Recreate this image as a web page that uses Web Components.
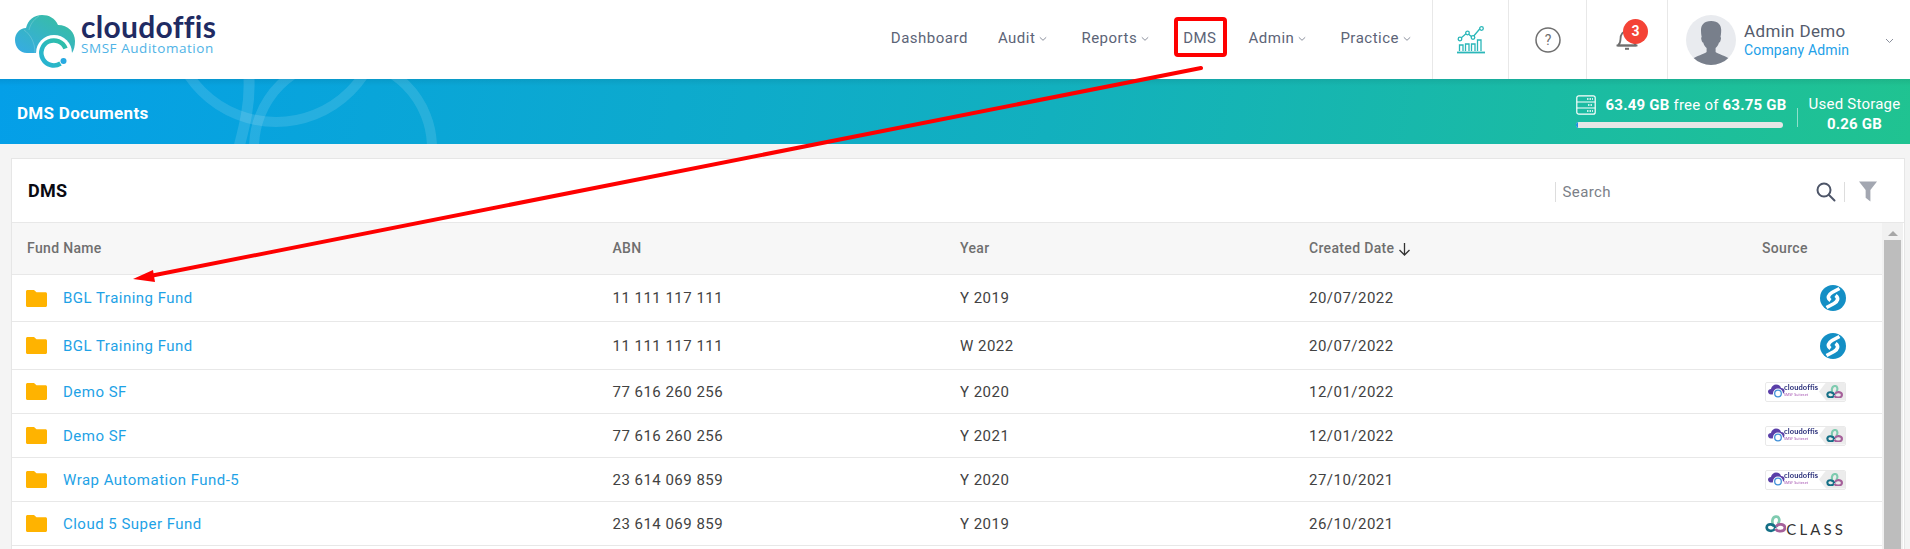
<!DOCTYPE html>
<html><head><meta charset="utf-8"><style>
html,body{margin:0;padding:0;background:#f4f4f4;font-family:Roboto,"Liberation Sans",sans-serif;height:549px;overflow:hidden}
body{position:relative}
</style></head><body>
<app-header></app-header>
<page-banner></page-banner>
<dms-card>
  <fund-row name="BGL Training Fund" abn="11 111 117 111" year="Y 2019" date="20/07/2022" src="bgl" h="47"></fund-row>
  <fund-row name="BGL Training Fund" abn="11 111 117 111" year="W 2022" date="20/07/2022" src="bgl" h="48"></fund-row>
  <fund-row name="Demo SF" abn="77 616 260 256" year="Y 2020" date="12/01/2022" src="tag" h="44"></fund-row>
  <fund-row name="Demo SF" abn="77 616 260 256" year="Y 2021" date="12/01/2022" src="tag" h="44"></fund-row>
  <fund-row name="Wrap Automation Fund-5" abn="23 614 069 859" year="Y 2020" date="27/10/2021" src="tag" h="44"></fund-row>
  <fund-row name="Cloud 5 Super Fund" abn="23 614 069 859" year="Y 2019" date="26/10/2021" src="class" h="44"></fund-row>
</dms-card>
<red-annotation></red-annotation>
<script>
const def=(n,html)=>customElements.define(n,class extends HTMLElement{
  connectedCallback(){ if(this.shadowRoot)return; const r=this.attachShadow({mode:'open'}); r.innerHTML=typeof html==='function'?html(this):html; }
});
const chev=`<svg width="8" height="6" viewBox="0 0 8 6" style="margin-left:4px;position:relative;top:1px"><path d="M.8 1.3 4 4.3l3.2-3" fill="none" stroke="#8a8f9c" stroke-width="1"/></svg>`;

def('nav-item',e=>`<style>:host{display:flex;align-items:center;font-size:15px;letter-spacing:.5px;color:#5c6477;white-space:nowrap;margin-left:var(--m,0)}</style><slot></slot>${e.hasAttribute('menu')?chev:''}`);

def('cloud-logo',`<style>:host{display:flex;align-items:center;height:79px}
.t{display:flex;flex-direction:column;margin-left:5px;margin-top:-12px}
.a{font:700 30px/27px Lato,sans-serif;color:#1f2b63;letter-spacing:.3px}
.b{font:400 13.5px/14px "Open Sans",sans-serif;color:#4fb3e6;letter-spacing:.55px;margin-top:1px}
svg{margin-left:15px;flex:none;margin-top:2px}</style>
<svg width="61" height="54" viewBox="0 0 61 54"><defs><linearGradient id="g" x1="0" y1="1" x2="1" y2="0"><stop offset="0" stop-color="#36abe6"/><stop offset="1" stop-color="#38c09a"/></linearGradient><linearGradient id="r" x1="0" y1="1" x2="1" y2="0"><stop offset="0" stop-color="#27b3d6"/><stop offset="1" stop-color="#30bfa5"/></linearGradient></defs>
<path d="M12 39C5 39 0 33 0 26c0-7 5-12 11-12 2-8 8-13 16-13 7 0 13 3 16 10 10 0 17 7 17 16 0 5-1 9-3 12H12z" fill="url(#g)"/>
<path d="M9 16c6 4 11 12 11 23M24 2c-6 4-9 9-10 14" fill="none" stroke="#fff" stroke-opacity=".18" stroke-width="1"/>
<circle cx="39" cy="39" r="18" fill="#fff"/><path d="M45.500 49.500A12.500 12.500 0 1 1 50.500 34.500" fill="none" stroke="url(#r)" stroke-width="4.500"/>
<circle cx="48.500" cy="47" r="3" fill="#27a9e1"/></svg>
<div class="t"><span class="a">cloudoffis</span><span class="b">SMSF Auditomation</span></div>`);

def('icon-cell',`<style>:host{display:flex;align-items:center;justify-content:center;height:79px;border-left:1.5px solid #e8e8e8;box-sizing:border-box;position:relative;width:var(--w)}</style><slot></slot>`);

def('user-box',`<style>:host{display:flex;align-items:center;height:79px;border-left:1.5px solid #e8e8e8;box-sizing:border-box;width:243px;padding-left:18px;position:relative}
.av{width:50px;height:50px;border-radius:50%;background:#e9ebef;overflow:hidden;flex:none}
.n{margin-left:8px;display:flex;flex-direction:column;margin-top:1px}
.a{font-size:17px;line-height:20px;color:#545b6c;letter-spacing:.35px;white-space:nowrap}
.c{font-size:14px;line-height:18px;color:#22a0e8;letter-spacing:.15px;white-space:nowrap}
.d{margin-left:36px;margin-top:2px}</style>
<div class="av"><svg width="50" height="50" viewBox="0 0 50 50"><path d="M25 6c-7 0-10 4-10 9 0 3 .3 5 .7 7-.8.400-.6 2 .1 4 .4 1 1 1.500 1.400 1.500.6 2.500 2 4.500 3.400 5.500v4c-2 2-11 4-14 7-1.500 1.500-2.500 4-2.500 6h42c0-2-1-4.500-2.500-6-3-3-12-5-14-7v-4c1.400-1 2.800-3 3.400-5.500.4 0 1-.5 1.400-1.500.7-2 .9-3.600.1-4 .4-2 .7-4 .7-7 0-5-3-9-10-9z" fill="#787f8b"/></svg></div>
<div class="n"><span class="a">Admin Demo</span><span class="c">Company Admin</span></div>
<svg class="d" width="9" height="6" viewBox="0 0 9 6"><path d="M1 1l3.500 3.500L8 1" fill="none" stroke="#8a8f9c" stroke-width="1"/></svg>`);

def('app-header',`<style>:host{display:flex;height:79px;background:#fff;align-items:stretch;position:relative;z-index:2}
nav{display:flex;align-items:center;margin-left:auto;height:75px;padding-right:21px}
.b{position:absolute;left:8px;top:-8px;width:25px;height:25px;border-radius:50%;background:#f44336;color:#fff;font:700 14px/25px Roboto,sans-serif;text-align:center}
.bell{position:relative;display:block;width:24px;height:24px;margin-top:-1px}
</style>
<cloud-logo></cloud-logo>
<nav>
<nav-item>Dashboard</nav-item>
<nav-item menu style="--m:30px">Audit</nav-item>
<nav-item menu style="--m:34px">Reports</nav-item>
<nav-item style="--m:34px">DMS</nav-item>
<nav-item menu style="--m:32px">Admin</nav-item>
<nav-item menu style="--m:34px">Practice</nav-item>
</nav>
<icon-cell style="--w:76px"><svg width="28" height="28" viewBox="0 0 28 28" fill="none" stroke="#2bb7b9" stroke-width="1.300"><path d="M0 26.500h28" stroke-width="1.800"/><path d="M2.500 25v-6h3.500v6M8.500 25v-7h3.500v7M14.500 25v-7h3.500v7M20.500 25v-11h3.500v11"/><path d="M3.500 12.500 10 6.800l5.500 4.700 8-9.500"/><circle cx="3" cy="13" r="1.800" fill="#fff"/><circle cx="10.500" cy="7" r="1.800" fill="#fff"/><circle cx="16" cy="11.500" r="1.800" fill="#fff"/><circle cx="24.500" cy="2.500" r="1.800" fill="#fff"/></svg></icon-cell>
<icon-cell style="--w:78px"><svg width="26" height="26" viewBox="0 0 26 26"><circle cx="13" cy="13" r="12" fill="none" stroke="#6f6f6f" stroke-width="1.500"/><text x="13" y="18" text-anchor="middle" font-family="Roboto,sans-serif" font-size="14" fill="#6f6f6f">?</text></svg></icon-cell>
<icon-cell style="--w:81px"><div class="bell"><svg width="24" height="24" viewBox="0 0 24 24" fill="none" stroke="#6f6f6f" stroke-width="1.800"><path d="M3 18.500c1.800-1.500 2.500-3.500 2.500-6.500 0-4.500 2.500-8 6.500-8s6.500 3.500 6.500 8c0 3 .7 5 2.500 6.500z" stroke-linejoin="round"/><path d="M1.500 18.500h21"/><path d="M10 21.800h4" stroke-width="2"/></svg><span class="b">3</span></div></icon-cell>
<user-box></user-box>`);

def('storage-meter',`<style>:host{display:flex;align-items:center;color:#fff;position:relative;margin-left:auto;padding-right:9px}
.l{display:flex;flex-direction:column;width:207px}
.top{display:flex;align-items:center;font-size:15px;line-height:20px;letter-spacing:.22px;white-space:nowrap;height:20px}
svg{margin-right:10px;flex:none}
b{font-weight:700}
.bar{height:6px;background:#e6e6e6;border-radius:3px;margin-top:7px;overflow:hidden}
.bar i{display:block;width:2px;height:6px;background:#1a8fe0}
.sep{width:1.500px;height:19px;background:rgba(255,255,255,.5);margin:12px 10px 0 14px}
.r{text-align:center;font-size:15px;line-height:20px;letter-spacing:.22px;width:93px;white-space:nowrap;margin-top:4px}</style>
<div class="l"><div class="top"><svg width="20" height="20" viewBox="0 0 20 20" fill="none" stroke="#fff" stroke-width="1.200"><rect x=".8" y=".8" width="18.400" height="18.400" rx="2"/><path d="M.8 7h18.400M.8 13h18.400"/><path d="M11 4h6M12 10h5M11 16h6" stroke-dasharray="1.500 1" stroke-width="1.500"/></svg><span><b>63.49 GB</b> free of <b>63.75 GB</b></span></div><div class="bar"><i></i></div></div>
<div class="sep"></div>
<div class="r">Used Storage<br><b>0.26 GB</b></div>`);

def('page-banner',`<style>:host{display:flex;align-items:center;height:65px;box-sizing:border-box;padding:0 0 0 17px;background:linear-gradient(180deg,rgba(0,0,0,.07),rgba(0,0,0,0) 7px),linear-gradient(100deg,#049fe8 0%,#12b0be 55%,#20c391 100%);position:relative;overflow:hidden}
h1{margin:2px 0 0;font:700 17px/20px Roboto,sans-serif;color:#fff;letter-spacing:.3px;position:relative}
svg{position:absolute;left:0;top:0}</style>
<svg width="520" height="65" viewBox="0 0 520 65" fill="none" stroke="#fff" stroke-opacity=".12" stroke-width="10"><circle cx="276" cy="-62" r="105"/><circle cx="343" cy="69" r="89"/><path d="M249 0C250 25 245 45 239 68" stroke-width="11"/></svg>
<h1>DMS Documents</h1><storage-meter></storage-meter>`);

def('dms-card',`<style>:host{display:block;margin:14px 5px 0 11px;background:#fff;border:1px solid #e6e6e6;border-bottom:0;box-sizing:border-box;height:391px;position:relative}
.top{display:flex;align-items:center;height:64px;padding-left:16px;border-bottom:1.500px solid #e8e8e8;box-sizing:border-box}
h2{margin:0;font:700 18px/22px Roboto,sans-serif;color:#0a0a12;letter-spacing:.25px}
.s{margin-left:auto;display:flex;align-items:center;height:22px;padding-right:26px;margin-top:2px}
.in{border-left:1.500px solid #ddd;height:20px;width:253px;padding-left:7px;font-size:15px;line-height:20px;color:#7b7f88;letter-spacing:.4px}
.v{width:1.500px;height:20px;background:#ddd;margin:0 14px 0 8px}
.body{display:flex}
.tbl{flex:1;min-width:0}
.sb{width:21px;background:#f1f1f1;display:flex;flex-direction:column;align-items:center;height:327px;flex:none;margin-right:1px}
.sb i{display:block;width:0;height:0;border:5px solid transparent;border-top:0;border-bottom-color:#a7a7a7;margin-top:8px;margin-bottom:4px}
.sb u{display:block;width:17px;flex:1;background:#bdbdbd}
.head{display:grid;grid-template-columns:585.5px 347.5px 349px 452px 1fr;height:52px;align-items:center;padding:0 0 2px 15px;background:#f7f7f7;border-bottom:1.500px solid #e8e8e8;box-sizing:border-box;font-size:14px;font-weight:500;color:#6f6f6f;letter-spacing:.33px;white-space:nowrap}
.head span:last-child{margin-left:1px}
</style>
<div class="top"><h2>DMS</h2><div class="s"><div class="in">Search</div>
<svg width="20" height="20" viewBox="0 0 20 20" fill="none" stroke="#4d5568" stroke-width="2"><circle cx="8" cy="8" r="6.500"/><path d="M13 13l5.500 5.500" stroke-linecap="round"/></svg>
<div class="v"></div>
<svg width="19" height="21" viewBox="0 0 20 21"><path d="M0 0h19l-7 9v12l-5-4V9z" fill="#a3a7b1"/></svg></div></div>
<div class="body"><div class="tbl"><div class="head"><span>Fund Name</span><span>ABN</span><span>Year</span><span>Created Date <svg width="13" height="14" viewBox="0 0 13 14" style="vertical-align:-3px" fill="none" stroke="#333" stroke-width="1.300"><path d="M6.500 1v12M1.500 8l5 5 5-5"/></svg></span><span>Source</span></div><slot></slot></div>
<div class="sb"><i></i><u></u></div></div>`);

const folder=`<svg width="21" height="17" viewBox="0 0 21 17" style="flex:none;margin-right:16px;margin-left:-1px"><path d="M1.500 0H8l2.500 2.200h9c.8 0 1.500.7 1.500 1.500v11.800c0 .8-.7 1.500-1.500 1.500h-18C.7 17 0 16.300 0 15.500v-14C0 .7.700 0 1.500 0z" fill="#ffb300"/></svg>`;
const bgl=`<svg width="26" height="26" viewBox="0 0 26 26"><clipPath id="c"><circle cx="13" cy="13" r="13"/></clipPath><circle cx="13" cy="13" r="13" fill="#148fc5"/><g clip-path="url(#c)" fill="none" stroke="#fff" stroke-width="3.600"><path d="M19.500 3.500 12 7.500C8 10 7 13 10.500 15.500"/><path d="M6.500 22.500 14 18.500C18 16 19 13 15.500 10.500"/></g></svg>`;
const rings=(w)=>`<svg width="${w}" height="${w*26/32}" viewBox="0 0 32 26" fill="none" stroke-width="4"><path d="M13 17C10 11 10 3 16 2c6-1 7 7 3 11" stroke="#7fcbb0"/><path d="M16 19C14 13 3 11 2.500 18c0 6 9.500 7 12.500 2" stroke="#146f86"/><path d="M16 20c2 5 13 5 14-1 0-7-11-7-13-2" stroke="#a5609a"/></svg>`;
const tag=`<div style="width:81px;height:20px;box-sizing:border-box;background:#fff;border:1px solid #e9e9e9;border-radius:2px;display:flex;overflow:hidden;position:relative;filter:blur(.25px)">
<svg width="17" height="14" viewBox="0 0 17 14" style="margin:1.500px 0 0 2px;flex:none"><path d="M3 10.500C1 10.500 0 9 0 7.500 0 6 1.500 5 3 5c.5-3 3-4.500 5-4.500 3 0 4.500 1.500 5 3.500 2 0 3.500 1 3.500 3 0 1-.5 2-1 2.500z" fill="#5a3fa8"/><circle cx="10" cy="9.500" r="5" fill="#fff"/><circle cx="10" cy="9.500" r="3.300" fill="none" stroke="#3f8fd8" stroke-width="1.300"/></svg>
<span style="position:absolute;left:18px;top:0;font:700 7.500px/9px Lato,sans-serif;color:#2a2f7a;letter-spacing:.12px;white-space:nowrap">cloudoffis</span>
<span style="position:absolute;left:18px;top:9px;font:400 3.500px/5px 'Open Sans',sans-serif;color:#9a3fa8;white-space:nowrap;letter-spacing:.1px">SMSF Suiteset</span>
<div style="position:absolute;right:0;top:0;bottom:0;width:26px;background:#ececec;clip-path:polygon(7px 0,100% 0,100% 100%,7px 100%,0 50%);display:flex;align-items:center;justify-content:flex-end;padding-right:2px;box-sizing:border-box">${rings(17)}</div></div>`;
const cls=`<div style="display:flex;align-items:flex-end;width:81px">${rings(32)}<span style="font:400 15px/15px Lato,sans-serif;color:#333;letter-spacing:3.100px;margin-left:0;white-space:nowrap">CLASS</span></div>`;

def('fund-row',e=>`<style>:host{display:grid;grid-template-columns:585.5px 347.5px 349px 452px 1fr;align-items:center;height:${e.getAttribute('h')}px;box-sizing:border-box;padding-left:15px;border-bottom:1.500px solid #e8e8e8;font-size:15px;letter-spacing:.48px;color:#424242;white-space:nowrap}
.n{display:flex;align-items:center;color:#1ea2e6}
.src{display:flex;justify-content:flex-end;padding-right:36px;letter-spacing:0}
</style><div class="n">${folder}<span>${e.getAttribute('name')}</span></div><div>${e.getAttribute('abn')}</div><div>${e.getAttribute('year')}</div><div>${e.getAttribute('date')}</div><div class="src">${{bgl,tag,class:cls}[e.getAttribute('src')]}</div>`);

def('red-annotation',`<style>:host{position:absolute;left:0;top:0;width:1910px;height:549px;pointer-events:none;z-index:5;display:block}</style>
<svg width="1910" height="549" viewBox="0 0 1910 549"><rect x="1176" y="19" width="49" height="36" rx="2" fill="none" stroke="#fe0000" stroke-width="4"/><path d="M1201 68 150 276" stroke="#fe0000" stroke-width="4" stroke-linecap="round"/><path d="M133 279 153 270l2 12z" fill="#fe0000"/></svg>`);
</script>
</body></html>
